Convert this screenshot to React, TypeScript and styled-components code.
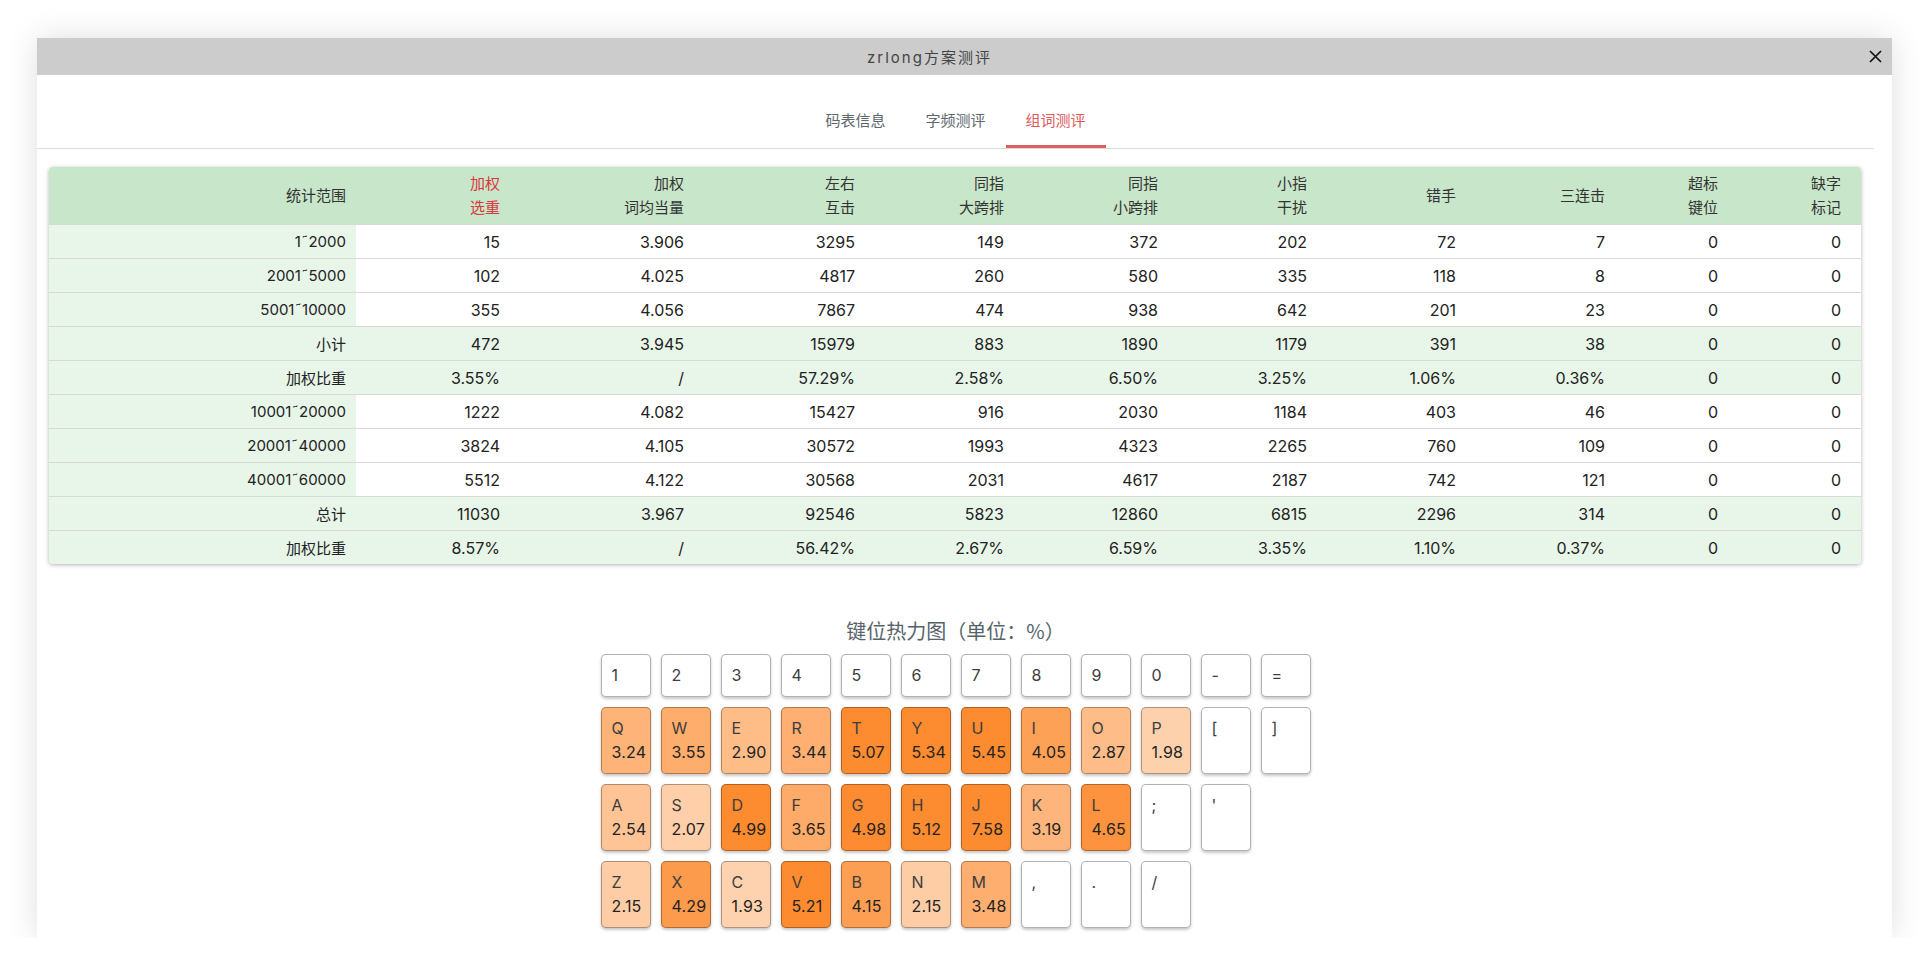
import React, { useState } from 'react'
import styled, { createGlobalStyle } from 'styled-components'

const GlobalStyle = createGlobalStyle`
  body {
    margin: 0;
    background: #fff;
    font-family: Inter, "Noto Sans CJK SC", sans-serif;
  }
`

const Modal = styled.div`
  width: 1855px;
  margin: 38px 0 0 37px;
  background: #fff;
  box-shadow: 0 0 30px rgba(0, 0, 0, 0.13);
`

const TitleBar = styled.div`
  display: flex;
  align-items: center;
  height: 37px;
  background: #cccccc;
`

const Title = styled.div`
  flex: 1;
  text-align: center;
  font-size: 15px;
  letter-spacing: 2px;
  color: #444;
`

const CloseButton = styled.div`
  width: 70px;
  display: flex;
  justify-content: flex-end;
  padding-right: 10px;
  box-sizing: border-box;
  cursor: pointer;
`

const Body = styled.div`
  padding: 0 18px 10px 0;
`

const Tabs = styled.div`
  display: flex;
  justify-content: center;
  margin-top: 27px;
  border-bottom: 1px solid #dcdcdc;
`

const Tab = styled.div<{ $active?: boolean }>`
  width: 100px;
  height: 46px;
  box-sizing: border-box;
  line-height: 36px;
  text-align: center;
  font-size: 15px;
  font-family: "Noto Sans CJK SC", sans-serif;
  color: ${p => (p.$active ? '#e05a5c' : '#5d676e')};
  border-bottom: 3px solid ${p => (p.$active ? '#e06062' : 'transparent')};
  cursor: pointer;
`

const TableCard = styled.div`
  margin: 18px 13px 0 12px;
  border-radius: 4px;
  overflow: hidden;
  box-shadow: 0 1px 4px rgba(0, 0, 0, 0.3);
`

const Table = styled.table`
  width: 100%;
  table-layout: fixed;
  border-collapse: collapse;
  font-size: 16px;
  color: #222;
`

const HeadCell = styled.th<{ $hot?: boolean }>`
  height: 57px;
  padding: 0 10px;
  text-align: right;
  vertical-align: middle;
  line-height: 24px;
  font-weight: normal;
  font-size: 15px;
  background: #c8e6c9;
  color: ${p => (p.$hot ? '#d9363e' : '#333')};
  &:last-child {
    padding-right: 20px;
  }
`

const Row = styled.tr<{ $summary?: boolean }>`
  background: ${p => (p.$summary ? '#e8f5e9' : '#fff')};
  border-top: 1px solid #d8d8d8;
`

const Cell = styled.td`
  height: 33px;
  padding: 0 10px;
  text-align: right;
  vertical-align: middle;
  &:first-child {
    background: #e8f5e9;
    font-size: 15px;
  }
  &:last-child {
    padding-right: 20px;
  }
`

const Heatmap = styled.div`
  margin-top: 53px;
`

const HeatTitle = styled.div`
  text-align: center;
  font-size: 20px;
  line-height: 28px;
  color: #56636b;
  font-family: "Noto Sans CJK SC", sans-serif;
  margin-bottom: 9px;
`

const Keyboard = styled.div`
  display: flex;
  flex-direction: column;
  gap: 10px;
  width: fit-content;
  margin: 0 auto;
`

const KeyRow = styled.div`
  display: flex;
  gap: 10px;
`

const Key = styled.div<{ $v?: number }>`
  width: 50px;
  box-sizing: border-box;
  padding: 8px 9px 9px 10px;
  border: 1px solid rgba(0, 0, 0, 0.3);
  border-radius: 5px;
  box-shadow: 0 2px 3px rgba(0, 0, 0, 0.22);
  background: ${p => heat(p.$v)};
  font-family: Inter, sans-serif;
  font-size: 16px;
  line-height: 24px;
`

const KeyLabel = styled.div`
  color: #3d3d3d;
`

const KeyValue = styled.div`
  color: #222;
  letter-spacing: 0.2px;
`

function heat(v?: number) {
  if (v === undefined) return '#fff'
  const a = Math.min(1, v / 5)
  const mix = (c: number) => Math.round(c * a + 255 * (1 - a))
  return `rgb(${mix(253)}, ${mix(139)}, ${mix(48)})`
}

const headers: { lines: string[]; hot?: boolean }[] = [
  { lines: ['统计范围'] },
  { lines: ['加权', '选重'], hot: true },
  { lines: ['加权', '词均当量'] },
  { lines: ['左右', '互击'] },
  { lines: ['同指', '大跨排'] },
  { lines: ['同指', '小跨排'] },
  { lines: ['小指', '干扰'] },
  { lines: ['错手'] },
  { lines: ['三连击'] },
  { lines: ['超标', '键位'] },
  { lines: ['缺字', '标记'] },
]

const colWidths = [307, 154, 184, 171, 149, 154, 149, 149, 149, 113, 133]

const rows: { cells: string[]; summary?: boolean }[] = [
  { cells: ['1˜2000', '15', '3.906', '3295', '149', '372', '202', '72', '7', '0', '0'] },
  { cells: ['2001˜5000', '102', '4.025', '4817', '260', '580', '335', '118', '8', '0', '0'] },
  { cells: ['5001˜10000', '355', '4.056', '7867', '474', '938', '642', '201', '23', '0', '0'] },
  { cells: ['小计', '472', '3.945', '15979', '883', '1890', '1179', '391', '38', '0', '0'], summary: true },
  { cells: ['加权比重', '3.55%', '/', '57.29%', '2.58%', '6.50%', '3.25%', '1.06%', '0.36%', '0', '0'], summary: true },
  { cells: ['10001˜20000', '1222', '4.082', '15427', '916', '2030', '1184', '403', '46', '0', '0'] },
  { cells: ['20001˜40000', '3824', '4.105', '30572', '1993', '4323', '2265', '760', '109', '0', '0'] },
  { cells: ['40001˜60000', '5512', '4.122', '30568', '2031', '4617', '2187', '742', '121', '0', '0'] },
  { cells: ['总计', '11030', '3.967', '92546', '5823', '12860', '6815', '2296', '314', '0', '0'], summary: true },
  { cells: ['加权比重', '8.57%', '/', '56.42%', '2.67%', '6.59%', '3.35%', '1.10%', '0.37%', '0', '0'], summary: true },
]

type KeyData = [string, number?]

const keyRows: KeyData[][] = [
  [['1'], ['2'], ['3'], ['4'], ['5'], ['6'], ['7'], ['8'], ['9'], ['0'], ['-'], ['=']],
  [['Q', 3.24], ['W', 3.55], ['E', 2.9], ['R', 3.44], ['T', 5.07], ['Y', 5.34], ['U', 5.45], ['I', 4.05], ['O', 2.87], ['P', 1.98], ['['], [']']],
  [['A', 2.54], ['S', 2.07], ['D', 4.99], ['F', 3.65], ['G', 4.98], ['H', 5.12], ['J', 7.58], ['K', 3.19], ['L', 4.65], [';'], ["'"]],
  [['Z', 2.15], ['X', 4.29], ['C', 1.93], ['V', 5.21], ['B', 4.15], ['N', 2.15], ['M', 3.48], [','], ['.'], ['/']],
]

const tabs = ['码表信息', '字频测评', '组词测评']

export default function App() {
  const [tab, setTab] = useState(2)

  return (
    <>
      <GlobalStyle />
      <Modal>
        <TitleBar>
          <Title>zrlong方案测评</Title>
          <CloseButton>
            <svg width="13" height="13" viewBox="0 0 13 13">
              <path d="M1 1L12 12M12 1L1 12" stroke="#111" strokeWidth="1.7" />
            </svg>
          </CloseButton>
        </TitleBar>
        <Body>
          <Tabs>
            {tabs.map((t, i) => (
              <Tab key={t} $active={i === tab} onClick={() => setTab(i)}>
                {t}
              </Tab>
            ))}
          </Tabs>
          <TableCard>
            <Table>
              <colgroup>
                {colWidths.map((w, i) => <col key={i} style={{ width: w }} />)}
              </colgroup>
              <thead>
                <tr>
                  {headers.map((h, i) => (
                    <HeadCell key={i} $hot={h.hot}>
                      {h.lines.map((l, j) => <div key={j}>{l}</div>)}
                    </HeadCell>
                  ))}
                </tr>
              </thead>
              <tbody>
                {rows.map((r, i) => (
                  <Row key={i} $summary={r.summary}>
                    {r.cells.map((c, j) => <Cell key={j}>{c}</Cell>)}
                  </Row>
                ))}
              </tbody>
            </Table>
          </TableCard>
          <Heatmap>
            <HeatTitle>键位热力图（单位：%）</HeatTitle>
            <Keyboard>
              {keyRows.map((kr, i) => (
                <KeyRow key={i}>
                  {kr.map(([label, v]) => (
                    <Key key={label} $v={v}>
                      <KeyLabel>{label}</KeyLabel>
                      {v !== undefined && <KeyValue>{v.toFixed(2)}</KeyValue>}
                    </Key>
                  ))}
                </KeyRow>
              ))}
            </Keyboard>
          </Heatmap>
        </Body>
      </Modal>
    </>
  )
}
